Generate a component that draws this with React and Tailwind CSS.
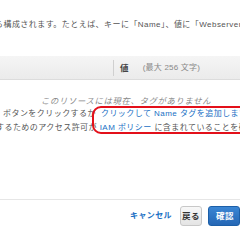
export default function App() {
  const ff = { fontFamily: '"Liberation Sans", "Noto Sans CJK JP", sans-serif' };
  return (
    <div className="relative w-[240px] h-[240px] overflow-hidden bg-white text-[8px] leading-[10px] tracking-[0.45px] text-[#555]" style={ff}>
      <div className="pt-[20px] ml-[-5px] whitespace-nowrap">
        ら構成されます。たとえば、キーに「Name」、値に「Webserver」を指定します。
      </div>
      <div className="mt-[26px] h-[24px] flex items-center bg-gradient-to-b from-[#f5f5f5] to-[#ebebeb] border-b border-[#dcdcdc] whitespace-nowrap tracking-[0.2px]">
        <div className="w-[114px] h-[16px] border-r border-[#d0d0d0]" />
        <div className="ml-[6px] font-bold text-[#444] text-[8.5px]">値</div>
        <div className="ml-[14px] text-[#888]">(最大 256 文字)</div>
      </div>
      <div className="mt-[16px] ml-[41px] italic text-[#888] text-[8.3px] tracking-[0.7px] whitespace-nowrap">このリソースには現在、タグがありません</div>
      <div className="mt-[3px] ml-[3px] whitespace-nowrap">
        ボタンをクリックするか<span className="ml-[5px] text-[#1a6fc4]">クリックして Name タグを追加します</span>
      </div>
      <div className="mt-[4px] ml-[-4px] whitespace-nowrap">
        するためのアクセス許可が <span className="text-[#1a6fc4]">IAM ポリシー</span> に含まれていることを確認してください
      </div>
      <div className="absolute left-[92px] top-[106px] w-[170px] h-[28px] border-2 border-[#e3101a] rounded-[9px]" />
      <div className="mt-[66px] border-t border-[#e6e6e6]" />
      <div className="mt-[6px] flex items-center whitespace-nowrap">
        <div className="ml-[130px] w-[42px] text-[#1a6fc4] font-bold text-[8px] tracking-[0.4px]">キャンセル</div>
        <div className="ml-[8px] w-[29px] h-[20px] flex items-center justify-center rounded-[3px] border border-[#c8c8c8] bg-gradient-to-b from-[#f8f8f8] to-[#e4e4e4] text-[#333] font-bold text-[8.5px]">戻る</div>
        <div className="ml-[6px] w-[40px] h-[20px] flex items-center pl-[7px] rounded-[3px] border border-[#1c5fa8] bg-gradient-to-b from-[#3b86d4] to-[#2567b5] text-white font-bold text-[8.5px]">確認</div>
      </div>
    </div>
  );
}
